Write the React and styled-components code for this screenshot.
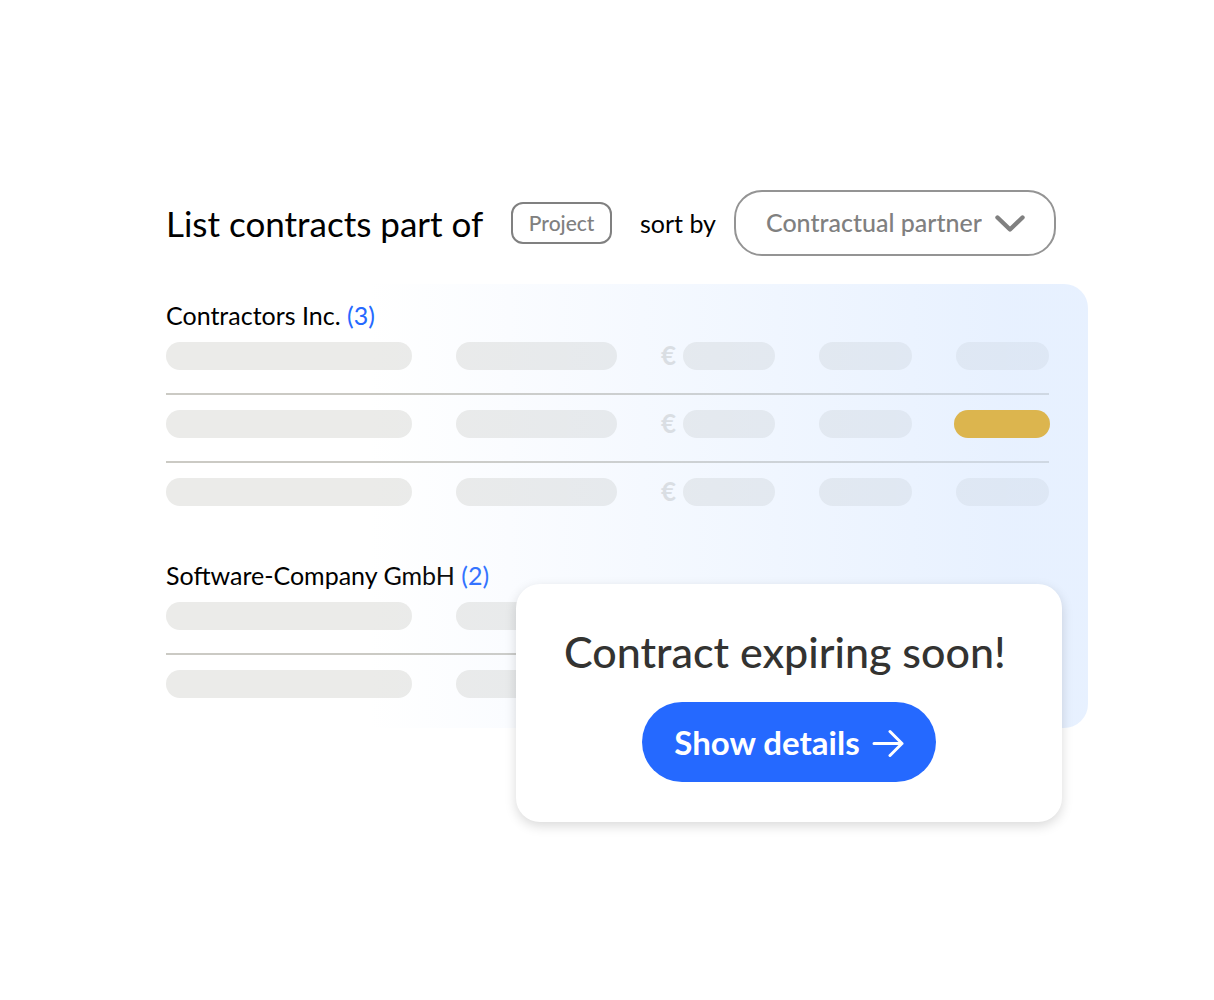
import React from "react";
import styled, { createGlobalStyle } from "styled-components";

const GlobalStyle = createGlobalStyle`
  *, *::before, *::after { box-sizing: border-box; }
  body {
    margin: 0;
    background: #ffffff;
    color: #000000;
    font-family: Lato, "Open Sans", sans-serif;
  }
  button, select { font-family: inherit; cursor: pointer; }
`;

const Page = styled.main`
  min-height: 100vh;
  padding: 190px 126px 160px 166px;
`;

const Header = styled.header`
  display: flex;
  align-items: center;
  justify-content: space-between;
  margin-bottom: 28px;
  padding-right: 32px;
  white-space: nowrap;
`;

const Title = styled.h1`
  margin: 0;
  font-size: 35px;
  line-height: 44px;
  font-weight: 400;
`;

const Tag = styled.button`
  height: 42px;
  padding: 0 16px;
  border: 2px solid #808080;
  border-radius: 12px;
  background: #ffffff;
  color: #808080;
  font-size: 21px;
  line-height: 24px;
  font-weight: 500;
`;

const SortGroup = styled.div`
  display: flex;
  align-items: center;
  gap: 18px;
`;

const SortLabel = styled.label`
  font-size: 25px;
  line-height: 32px;
`;

const SelectBox = styled.div`
  display: grid;
  align-items: center;
  width: 322px;
`;

const SortSelect = styled.select`
  grid-area: 1 / 1;
  appearance: none;
  width: 100%;
  height: 66px;
  padding: 0 72px 2px 30px;
  border: 2px solid #949494;
  border-radius: 28px;
  background: #ffffff;
  color: #808080;
  font-size: 25px;
  line-height: 32px;
  font-weight: 500;
`;

const Chevron = styled.svg`
  grid-area: 1 / 1;
  justify-self: end;
  width: 30px;
  height: 18px;
  margin: 2px 31px 0 0;
  pointer-events: none;
`;

const Board = styled.section`
  position: relative;
  display: flex;
  flex-direction: column;
  gap: 54px;
  padding: 16px 39px 30px 0;

  &::after {
    content: "";
    position: absolute;
    inset: 0;
    border-radius: 0 24px 24px 0;
    background: linear-gradient(
      to right,
      rgba(210, 228, 255, 0) 22%,
      rgba(210, 228, 255, 0.1) 36%,
      rgba(210, 228, 255, 0.53) 92%
    );
    pointer-events: none;
  }
`;

const GroupTitle = styled.h2`
  margin: 0 0 12px;
  font-size: 25px;
  line-height: 30px;
  font-weight: 400;
`;

const Count = styled.span`
  color: #2569ff;
`;

const Table = styled.table`
  display: block;
  width: 100%;
`;

const Rows = styled.tbody`
  display: block;
`;

const Row = styled.tr`
  display: grid;
  grid-template-columns: 246fr 161fr 114fr 93fr 93fr;
  column-gap: 44px;

  & + & {
    margin-top: 23px;
    padding-top: 15px;
    border-top: 2px solid #cbcac4;
  }
`;

const Cell = styled.td`
  display: flex;
  gap: 5px;
  height: 28px;
  padding: 0;
`;

const Currency = styled.span`
  width: 17px;
  color: #dcdcda;
  font-size: 26px;
  line-height: 26px;
  font-weight: 700;
`;

const Bar = styled.span`
  flex: 1;
  height: 28px;
  border-radius: 14px;
  background: #ebebe9;
`;

const Highlight = styled(Bar)`
  position: relative;
  z-index: 1;
  margin: 0 -1px 0 -2px;
  background: #dcb54e;
`;

const Notice = styled.aside`
  position: absolute;
  z-index: 2;
  top: 300px;
  right: 26px;
  display: flex;
  flex-direction: column;
  align-items: center;
  gap: 24px;
  width: 546px;
  padding: 42px 48px 40px;
  border-radius: 24px;
  background: #ffffff;
  box-shadow: 0 4px 12px rgba(0, 0, 0, 0.15);
  white-space: nowrap;
`;

const NoticeTitle = styled.h2`
  align-self: flex-start;
  margin: 0;
  color: #333331;
  font-size: 43px;
  line-height: 52px;
  font-weight: 500;
`;

const DetailsButton = styled.button`
  display: flex;
  align-items: center;
  justify-content: center;
  gap: 12px;
  height: 80px;
  padding: 0 32px;
  border: 0;
  border-radius: 40px;
  background: #2569ff;
  color: #ffffff;
  font-size: 33px;
  line-height: 40px;
  font-weight: 700;
`;

const Arrow = styled.svg`
  width: 32px;
  height: 30px;
`;

const groups = [
  { name: "Contractors Inc.", count: 3, currency: "€", expiring: 1 },
  { name: "Software-Company GmbH", count: 2 },
];

function ContractGroup({ name, count, currency, expiring }) {
  return (
    <section>
      <GroupTitle>
        {name} <Count>({count})</Count>
      </GroupTitle>
      <Table>
        <Rows>
          {Array.from({ length: count }, (_, i) => (
            <Row key={i}>
              <Cell><Bar /></Cell>
              <Cell><Bar /></Cell>
              <Cell>
                {currency && <Currency>{currency}</Currency>}
                <Bar />
              </Cell>
              <Cell><Bar /></Cell>
              <Cell>{i === expiring ? <Highlight /> : <Bar />}</Cell>
            </Row>
          ))}
        </Rows>
      </Table>
    </section>
  );
}

export default function App() {
  return (
    <>
      <GlobalStyle />
      <Page>
        <Header>
          <Title>List contracts part of</Title>
          <Tag type="button">Project</Tag>
          <SortGroup>
            <SortLabel htmlFor="sort">sort by</SortLabel>
            <SelectBox>
              <SortSelect id="sort">
                <option>Contractual partner</option>
              </SortSelect>
              <Chevron viewBox="0 0 30 18" fill="none" aria-hidden="true">
                <path d="M2.5 2.5 15 14.5 27.5 2.5" stroke="#808080" strokeWidth="4.4" strokeLinecap="round" strokeLinejoin="round" />
              </Chevron>
            </SelectBox>
          </SortGroup>
        </Header>
        <Board>
          {groups.map((group) => (
            <ContractGroup key={group.name} {...group} />
          ))}
          <Notice>
            <NoticeTitle>Contract expiring soon!</NoticeTitle>
            <DetailsButton type="button">
              Show details
              <Arrow viewBox="0 0 32 30" fill="none" aria-hidden="true">
                <path d="M2 16.5H30M18 4.5 30 16.5 18 28.5" stroke="#ffffff" strokeWidth="3" strokeLinecap="round" strokeLinejoin="round" />
              </Arrow>
            </DetailsButton>
          </Notice>
        </Board>
      </Page>
    </>
  );
}
